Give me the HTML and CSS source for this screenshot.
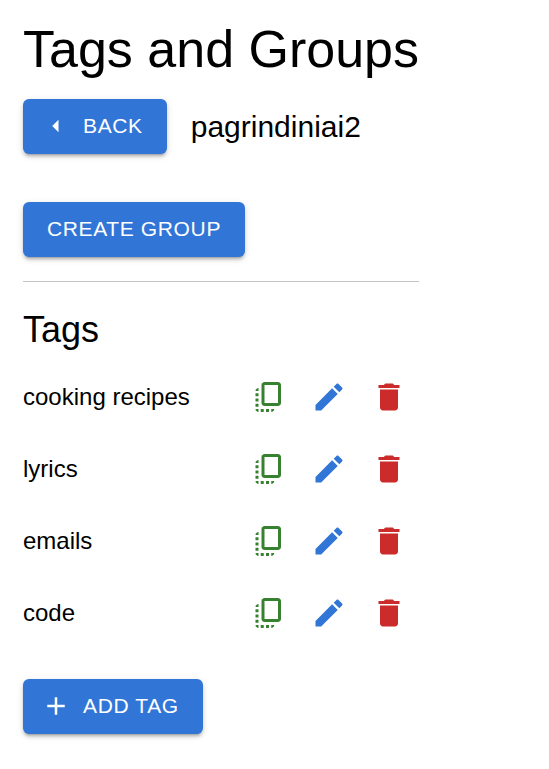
FILE: index.html
```html
<!DOCTYPE html>
<html lang="en">
<head>
<meta charset="utf-8">
<meta name="viewport" content="width=device-width, initial-scale=1">
<title>Tags and Groups</title>
<link rel="stylesheet" href="styles.css">
</head>
<body>
<svg class="sprite" aria-hidden="true">
  <symbol id="copy" viewBox="0 0 24 24"><path d="M18 2H9c-1.100 0-2 .9-2 2v12c0 1.100.9 2 2 2h9c1.100 0 2-.9 2-2V4c0-1.100-.9-2-2-2zm0 14H9V4h9v12zM3 15v-2h2v2H3zm0-5.500h2v2H3v-2zM10 20h2v2h-2v-2zm-7-1.500v-2h2v2H3zM5 22c-1.100 0-2-.9-2-2h2v2zm3.500 0h-2v-2h2v2zm5 0v-2h2c0 1.100-.9 2-2 2zM5 6v2H3c0-1.100.9-2 2-2z"/></symbol>
  <symbol id="edit" viewBox="0 0 24 24"><path d="M3 17.250V21h3.750L17.810 9.940l-3.750-3.750L3 17.250zM20.710 7.040c.39-.39.39-1.020 0-1.410l-2.340-2.340c-.39-.39-1.020-.39-1.410 0l-1.830 1.830 3.750 3.750 1.830-1.830z"/></symbol>
  <symbol id="delete" viewBox="0 0 24 24"><path d="M6 19c0 1.100.9 2 2 2h8c1.100 0 2-.9 2-2V7H6v12zM19 4h-3.500l-1-1h-5l-1 1H5v2h14V4z"/></symbol>
</svg>
<main class="page">
  <h1 class="title">Tags and Groups</h1>
  <div class="group-header">
    <button class="button" type="button"><svg class="button-icon" viewBox="0 0 24 24" aria-hidden="true"><path d="m14 7-5 5 5 5V7z"/></svg>BACK</button>
    <span class="group-name">pagrindiniai2</span>
  </div>
  <button class="button" type="button">CREATE GROUP</button>
  <hr class="divider">
  <h2 class="subtitle">Tags</h2>
  <ul class="tags">
    <li class="tag"><span class="tag-name">cooking recipes</span>
      <button class="icon-button copy" type="button" aria-label="Copy cooking recipes"><svg><use href="#copy"/></svg></button>
      <button class="icon-button edit" type="button" aria-label="Edit cooking recipes"><svg><use href="#edit"/></svg></button>
      <button class="icon-button delete" type="button" aria-label="Delete cooking recipes"><svg><use href="#delete"/></svg></button></li>
    <li class="tag"><span class="tag-name">lyrics</span>
      <button class="icon-button copy" type="button" aria-label="Copy lyrics"><svg><use href="#copy"/></svg></button>
      <button class="icon-button edit" type="button" aria-label="Edit lyrics"><svg><use href="#edit"/></svg></button>
      <button class="icon-button delete" type="button" aria-label="Delete lyrics"><svg><use href="#delete"/></svg></button></li>
    <li class="tag"><span class="tag-name">emails</span>
      <button class="icon-button copy" type="button" aria-label="Copy emails"><svg><use href="#copy"/></svg></button>
      <button class="icon-button edit" type="button" aria-label="Edit emails"><svg><use href="#edit"/></svg></button>
      <button class="icon-button delete" type="button" aria-label="Delete emails"><svg><use href="#delete"/></svg></button></li>
    <li class="tag"><span class="tag-name">code</span>
      <button class="icon-button copy" type="button" aria-label="Copy code"><svg><use href="#copy"/></svg></button>
      <button class="icon-button edit" type="button" aria-label="Edit code"><svg><use href="#edit"/></svg></button>
      <button class="icon-button delete" type="button" aria-label="Delete code"><svg><use href="#delete"/></svg></button></li>
  </ul>
  <button class="button" type="button"><svg class="button-icon" viewBox="0 0 24 24" aria-hidden="true"><path d="M19 13h-6v6h-2v-6H5v-2h6V5h2v6h6v2z"/></svg>ADD TAG</button>
</main>
</body>
</html>
```
FILE: styles.css
```css
* { box-sizing: border-box; }
body {
  margin: 0;
  background: #fff;
  color: #000;
  font-family: "Liberation Sans", Arial, sans-serif;
  font-size: 24px;
}
.sprite { display: none; }
.page {
  width: fit-content;
  padding: 20px 23px;
}
.title {
  margin: 0 0 20px;
  font-size: 52px;
  font-weight: 400;
  line-height: 59px;
}
.group-header {
  display: flex;
  align-items: center;
  gap: 24px;
  margin-bottom: 48px;
}
.group-name { font-size: 30px; }
.button {
  display: inline-flex;
  align-items: center;
  gap: 12px;
  padding: 8px 24px 10px;
  border: 0;
  border-radius: 6px;
  background: #3176d7;
  color: #fff;
  font-family: inherit;
  font-size: 21px;
  line-height: 37px;
  letter-spacing: 0.03em;
  box-shadow: 0 4px 2px -3px #0003, 0 3px 3px #0002, 0 2px 7px #0002;
}
.button-icon {
  width: 30px;
  height: 30px;
  margin-left: -6px;
  fill: currentColor;
}
.divider {
  height: 1px;
  margin: 24px 0;
  border: 0;
  background: #c4c4c4;
}
.subtitle {
  margin: 0 0 7px;
  font-size: 36px;
  font-weight: 400;
  line-height: 48px;
}
.tags {
  margin: 0 0 30px;
  padding: 0;
  list-style: none;
}
.tag {
  display: flex;
  align-items: center;
  height: 72px;
}
.tag-name { flex: 1; }
.icon-button {
  display: flex;
  padding: 12px;
  border: 0;
  background: none;
}
.icon-button svg {
  width: 36px;
  height: 36px;
  fill: currentColor;
}
.copy { color: #388130; }
.edit { color: #3176d7; }
.delete { color: #cc2b2b; }
```
